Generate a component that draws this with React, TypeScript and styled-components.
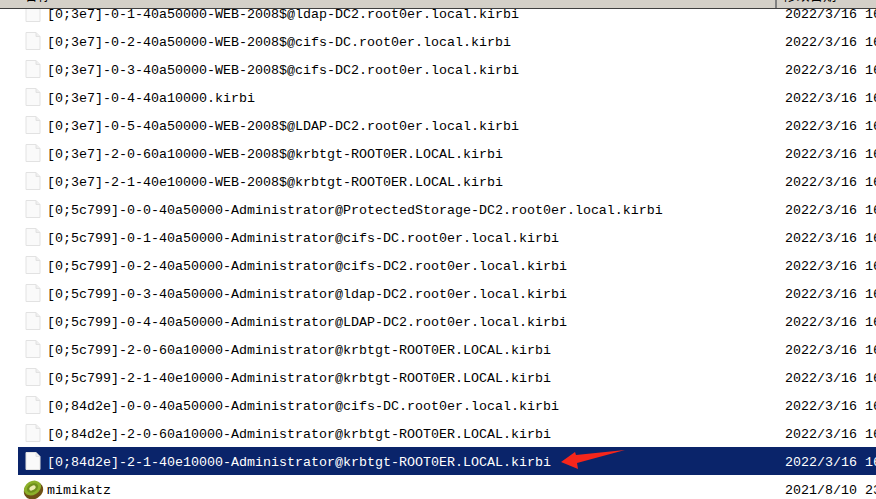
import React from 'react';
import styled, { createGlobalStyle } from 'styled-components';

const files = [
  '[0;3e7]-0-1-40a50000-WEB-2008$@ldap-DC2.root0er.local.kirbi',
  '[0;3e7]-0-2-40a50000-WEB-2008$@cifs-DC.root0er.local.kirbi',
  '[0;3e7]-0-3-40a50000-WEB-2008$@cifs-DC2.root0er.local.kirbi',
  '[0;3e7]-0-4-40a10000.kirbi',
  '[0;3e7]-0-5-40a50000-WEB-2008$@LDAP-DC2.root0er.local.kirbi',
  '[0;3e7]-2-0-60a10000-WEB-2008$@krbtgt-ROOT0ER.LOCAL.kirbi',
  '[0;3e7]-2-1-40e10000-WEB-2008$@krbtgt-ROOT0ER.LOCAL.kirbi',
  '[0;5c799]-0-0-40a50000-Administrator@ProtectedStorage-DC2.root0er.local.kirbi',
  '[0;5c799]-0-1-40a50000-Administrator@cifs-DC.root0er.local.kirbi',
  '[0;5c799]-0-2-40a50000-Administrator@cifs-DC2.root0er.local.kirbi',
  '[0;5c799]-0-3-40a50000-Administrator@ldap-DC2.root0er.local.kirbi',
  '[0;5c799]-0-4-40a50000-Administrator@LDAP-DC2.root0er.local.kirbi',
  '[0;5c799]-2-0-60a10000-Administrator@krbtgt-ROOT0ER.LOCAL.kirbi',
  '[0;5c799]-2-1-40e10000-Administrator@krbtgt-ROOT0ER.LOCAL.kirbi',
  '[0;84d2e]-0-0-40a50000-Administrator@cifs-DC.root0er.local.kirbi',
  '[0;84d2e]-2-0-60a10000-Administrator@krbtgt-ROOT0ER.LOCAL.kirbi',
  '[0;84d2e]-2-1-40e10000-Administrator@krbtgt-ROOT0ER.LOCAL.kirbi',
];

const GlobalStyle = createGlobalStyle`
  html, body {
    margin: 0;
    width: 876px;
    height: 499px;
    overflow: hidden;
    background: #fff;
  }
`;

const Page = styled.div`
  width: 876px;
  height: 499px;
  overflow: hidden;
  font-family: "Liberation Mono", "Noto Sans CJK SC", monospace;
  font-size: 13.33px;
  color: #000;
`;

const HeaderBar = styled.div`
  position: relative;
  z-index: 1;
  display: flex;
  height: 8px;
  background: #d4d0c8;
  border-bottom: 1px solid #404040;
  overflow: hidden;
`;

const HeaderCell = styled.div<{ $wide?: boolean }>`
  box-sizing: border-box;
  height: 8px;
  overflow: hidden;
  ${(p) => (p.$wide ? 'width: 777px; padding-left: 24px; border-right: 2px solid #808080;' : 'flex: 1; padding-left: 6px;')}
`;

const HeaderLabel = styled.span`
  display: block;
  margin-top: -10px;
  line-height: 14px;
`;

const List = styled.div`
  display: flex;
  flex-direction: column;
  margin-top: -10px;
  padding-left: 18px;
`;

const Row = styled.div<{ $selected?: boolean }>`
  display: flex;
  align-items: center;
  height: 28px;
  background: ${(p) => (p.$selected ? '#0a246a' : 'transparent')};
  color: ${(p) => (p.$selected ? '#fff' : '#000')};
`;

const IconSlot = styled.div<{ $inset: number }>`
  display: flex;
  width: 29px;
  padding-left: ${(p) => p.$inset}px;
  box-sizing: border-box;
  flex: none;
`;

const Name = styled.div`
  width: 738px;
  flex: none;
  padding-top: 2px;
  white-space: nowrap;
`;

const Modified = styled.div`
  padding-top: 2px;
  white-space: nowrap;
`;

const ArrowMark = styled.svg`
  position: absolute;
  z-index: 2;
  left: 560px;
  top: 449px;
`;

const FileIcon = () => (
  <svg width="16" height="18" viewBox="0 0 16 18">
    <path d="M1 .5H11L15 4.5V17.5H1Z" fill="#fafafa" stroke="#e2e2e2" />
    <path d="M11 .5V4.5H15" fill="#efefef" stroke="#e2e2e2" />
  </svg>
);

const KiwiIcon = () => (
  <svg width="21" height="21" viewBox="0 0 21 21">
    <ellipse cx="10.5" cy="11.5" rx="10" ry="8.5" fill="#6e5016" transform="rotate(-30 10.5 11.5)" />
    <ellipse cx="9.5" cy="9" rx="9" ry="6.8" fill="#8cb02a" transform="rotate(-30 9.5 9)" />
    <ellipse cx="9.5" cy="9" rx="6" ry="4.2" fill="#6f8f1c" transform="rotate(-30 9.5 9)" />
    <ellipse cx="9.5" cy="9" rx="3.4" ry="2.1" fill="#ecebb0" transform="rotate(-30 9.5 9)" />
  </svg>
);

const App = () => (
  <Page>
    <GlobalStyle />
    <HeaderBar>
      <HeaderCell $wide>
        <HeaderLabel>名称</HeaderLabel>
      </HeaderCell>
      <HeaderCell>
        <HeaderLabel>修改日期</HeaderLabel>
      </HeaderCell>
    </HeaderBar>
    <List>
      {files.map((name, i) => (
        <Row key={name} $selected={i === files.length - 1}>
          <IconSlot $inset={7}>
            <FileIcon />
          </IconSlot>
          <Name>{name}</Name>
          <Modified>2022/3/16 16:18</Modified>
        </Row>
      ))}
      <Row>
        <IconSlot $inset={5}>
          <KiwiIcon />
        </IconSlot>
        <Name>mimikatz</Name>
        <Modified>2021/8/10 23:14</Modified>
      </Row>
    </List>
    <ArrowMark width="66" height="22" viewBox="0 0 66 22">
      <path d="M1 13L15 3L16 6L65 1L17 14L18 20Z" fill="#f5261b" />
    </ArrowMark>
  </Page>
);

export default App;
